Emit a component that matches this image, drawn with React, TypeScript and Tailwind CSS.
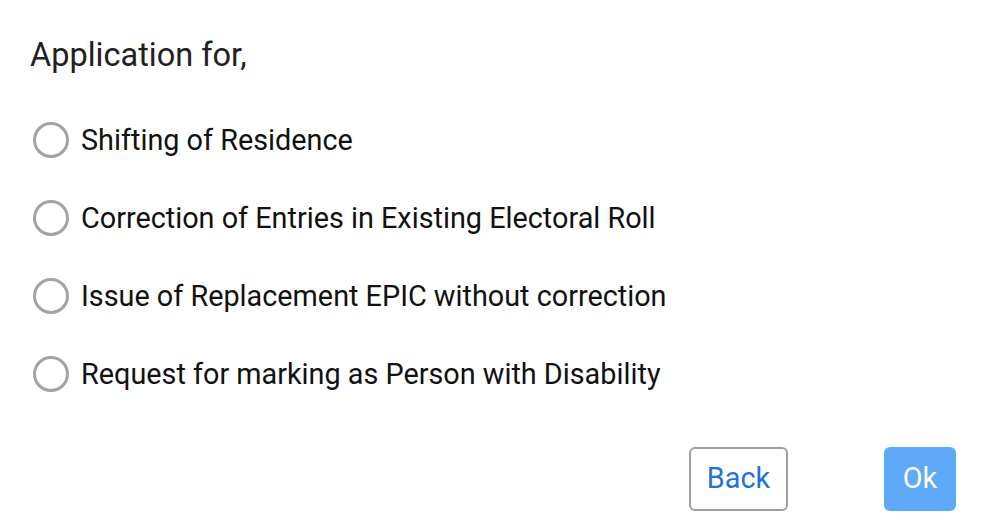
export default function App() {
  const options = [
    "Shifting of Residence",
    "Correction of Entries in Existing Electoral Roll",
    "Issue of Replacement EPIC without correction",
    "Request for marking as Person with Disability",
  ];
  return (
    <div className="w-[987px] h-[531px] bg-white relative overflow-hidden" style={{ fontFamily: "Roboto, sans-serif" }}>
      <div className="pl-[30px] pt-[36px] text-[32.5px] leading-[38px] text-[#212121]">Application for,</div>
      <div className="flex flex-col pl-[33px] pt-[47px] gap-[40px]">
        {options.map((o) => (
          <div key={o} className="flex items-center h-[38px]">
            <div className="w-[36px] h-[36px] rounded-full border-[3px] border-[#a3a3a3]" />
            <span className="ml-[12px] text-[28.8px] leading-[38px] text-[#111]">{o}</span>
          </div>
        ))}
      </div>
      <div className="flex justify-end items-center pr-[31px] pt-[54px] gap-[96px]">
        <button className="w-[99px] h-[64px] border-2 border-[#9e9e9e] rounded-[6px] text-[#1e73d8] text-[28.8px]">Back</button>
        <button className="w-[72px] h-[64px] rounded-[6px] bg-[#5ea9fa] text-white text-[28.8px]">Ok</button>
      </div>
    </div>
  );
}
